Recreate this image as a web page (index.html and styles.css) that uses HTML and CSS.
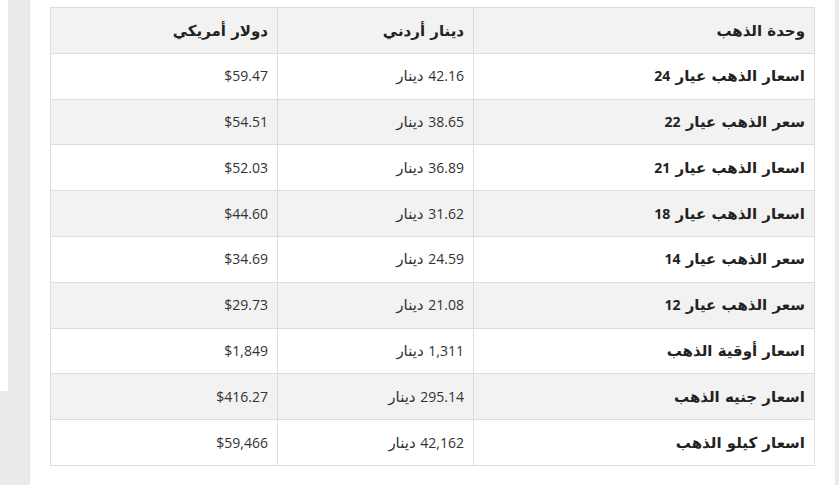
FILE: index.html
```html
<!DOCTYPE html>
<html lang="ar" dir="rtl">
<head>
<meta charset="utf-8">
<link rel="stylesheet" href="styles.css">
</head>
<body>
<div class="page">
  <div class="side-left"><div class="side-box"></div></div>
  <main class="main">
    <table class="prices">
      <colgroup>
        <col class="c1"><col class="c2"><col class="c3">
      </colgroup>
      <thead>
        <tr><th>وحدة الذهب</th><th>دينار أردني</th><th>دولار أمريكي</th></tr>
      </thead>
      <tbody>
        <tr><td class="name">اسعار الذهب عيار <span class="num">24</span></td><td><span class="num">42.16</span> دينار</td><td class="usd">$59.47</td></tr>
        <tr><td class="name">سعر الذهب عيار <span class="num">22</span></td><td><span class="num">38.65</span> دينار</td><td class="usd">$54.51</td></tr>
        <tr><td class="name">اسعار الذهب عيار <span class="num">21</span></td><td><span class="num">36.89</span> دينار</td><td class="usd">$52.03</td></tr>
        <tr><td class="name">اسعار الذهب عيار <span class="num">18</span></td><td><span class="num">31.62</span> دينار</td><td class="usd">$44.60</td></tr>
        <tr><td class="name">سعر الذهب عيار <span class="num">14</span></td><td><span class="num">24.59</span> دينار</td><td class="usd">$34.69</td></tr>
        <tr><td class="name">سعر الذهب عيار <span class="num">12</span></td><td><span class="num">21.08</span> دينار</td><td class="usd">$29.73</td></tr>
        <tr><td class="name">اسعار أوقية الذهب</td><td><span class="num">1,311</span> دينار</td><td class="usd">$1,849</td></tr>
        <tr><td class="name">اسعار جنيه الذهب</td><td><span class="num">295.14</span> دينار</td><td class="usd">$416.27</td></tr>
        <tr><td class="name">اسعار كيلو الذهب</td><td><span class="num">42,162</span> دينار</td><td class="usd">$59,466</td></tr>
      </tbody>
    </table>
  </main>
  <div class="side-right"></div>
</div>
</body>
</html>
```
FILE: styles.css
```css
html, body {
  margin: 0;
  padding: 0;
  background: #ffffff;
}
body {
  font-family: "DejaVu Sans", sans-serif;
  font-size: 15px;
  color: #333333;
}
.page {
  direction: ltr;
  display: flex;
  width: 839px;
  height: 485px;
  overflow: hidden;
}
.side-left {
  width: 30px;
  flex: none;
  background: #ebeaea;
  border-right: 1px solid #e4e3e3;
  box-sizing: border-box;
}
.side-box {
  width: 8px;
  height: 391px;
  background: #ffffff;
}
.main {
  flex: 1;
  background: #ffffff;
  padding: 7px 20px 0 20px;
}
.side-right {
  width: 5px;
  flex: none;
  background: #ebeaea;
}
.prices {
  direction: rtl;
  border-collapse: collapse;
  width: 764px;
  table-layout: fixed;
}
.c1 { width: 341px; }
.c2 { width: 196px; }
.c3 { width: 227px; }
.prices th,
.prices td {
  border: 1px solid #dddddd;
  text-align: right;
  padding: 0 9px 0 9px;
  height: 45.8px;
  box-sizing: border-box;
  vertical-align: middle;
  line-height: 20px;
}
.prices th {
  background: #f2f2f2;
  font-weight: 700;
  color: #222222;
  padding-top: 2px;
}
.prices td.name {
  font-weight: 700;
  color: #222222;
}
.num,
.usd {
  font-family: "Open Sans", sans-serif;
  font-size: 14px;
}
.prices tbody tr:nth-child(even) td {
  background: #f2f2f2;
}
```
